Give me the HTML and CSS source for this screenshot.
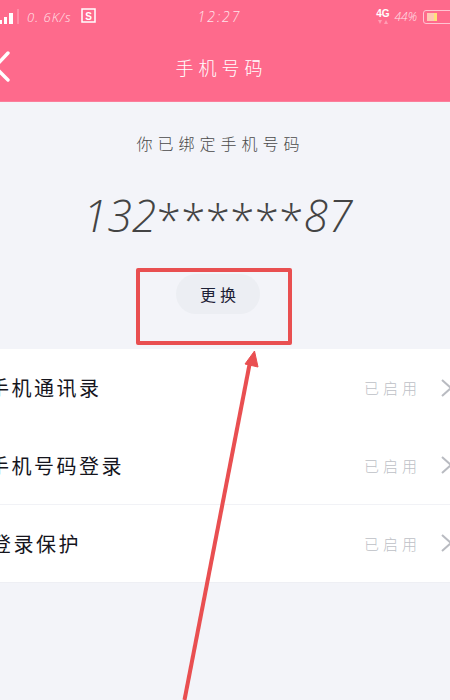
FILE: index.html
```html
<!DOCTYPE html>
<html lang="zh-CN">
<head>
    <meta charset="UTF-8">
    <meta name="viewport" content="width=device-width, initial-scale=1.0">
    <title>手机号码</title>
    <link rel="stylesheet" href="styles.css">
</head>
<body>
    <div class="phone">
        <div class="top-bar">
            <div class="status-bar">
                <div class="status-left">
                    <svg class="signal" width="20" height="16" viewBox="0 0 20 16">
                        <rect x="0" y="11" width="3" height="4" fill="#fff"/>
                        <rect x="5" y="8" width="3" height="7" fill="#fff"/>
                        <rect x="10" y="4" width="4" height="11" fill="#fff"/>
                        <rect x="18" y="0" width="2" height="15" fill="#ff8ba6"/>
                    </svg>
                    <span class="speed">0. 6K/s</span>
                    <svg class="s-icon" width="15" height="15" viewBox="0 0 15 15">
                        <path d="M1 1H14V14H1Z" fill="none" stroke="#fff" stroke-width="1.5"/>
                        <text x="7.5" y="11.5" class="s-mark" text-anchor="middle">S</text>
                    </svg>
                </div>
                <span class="clock">12:27</span>
                <div class="status-right">
                    <div class="network">
                        <span>4G</span>
                        <svg width="10" height="4" viewBox="0 0 10 4">
                            <path d="M0 0H4L2 4Z M6 4H10L8 0Z" fill="#ff9db3"/>
                        </svg>
                    </div>
                    <span class="battery-pct">44%</span>
                    <div class="battery"><div class="battery-fill"></div></div>
                </div>
            </div>
            <div class="nav">
                <svg class="back" width="10" height="32" viewBox="0 0 10 32">
                    <path d="M8 2L-5 16L8 29" fill="none" stroke="#fff" stroke-width="3.4" stroke-linecap="round" stroke-linejoin="round"/>
                </svg>
                <h1>手机号码</h1>
            </div>
        </div>

        <div class="bound">
            <p class="bound-label">你已绑定手机号码</p>
            <p class="bound-number">132<span class="stars">******</span>87</p>
            <button class="change-btn">更换</button>
        </div>

        <ul class="settings">
            <li>
                <span class="row-name name-a">手机通讯录</span>
                <span class="row-state">已启用</span>
                <svg class="row-arrow" width="10" height="18" viewBox="0 0 10 18">
                    <path d="M1 1L10 9L1 17" fill="none" stroke="#b9bbc1" stroke-width="2"/>
                </svg>
            </li>
            <li>
                <span class="row-name name-a">手机号码登录</span>
                <span class="row-state">已启用</span>
                <svg class="row-arrow" width="10" height="18" viewBox="0 0 10 18">
                    <path d="M1 1L10 9L1 17" fill="none" stroke="#b9bbc1" stroke-width="2"/>
                </svg>
            </li>
            <li class="with-line">
                <span class="row-name name-b">登录保护</span>
                <span class="row-state">已启用</span>
                <svg class="row-arrow" width="10" height="18" viewBox="0 0 10 18">
                    <path d="M1 1L10 9L1 17" fill="none" stroke="#b9bbc1" stroke-width="2"/>
                </svg>
            </li>
        </ul>

        <!-- red markup drawn on top of the screenshot -->
        <div class="mark-box"></div>
        <svg class="mark-arrow" width="450" height="700" viewBox="0 0 450 700">
            <path d="M184.500 700L250 362" fill="none" stroke="#e94f51" stroke-width="4"/>
            <path d="M254.500 351L258 367L245 364Z" fill="#e94f51" stroke="#e94f51" stroke-linejoin="round"/>
        </svg>
    </div>
</body>
</html>
```
FILE: styles.css
```css
* {
    box-sizing: border-box;
}

body {
    margin: 0;
    font-family: "Noto Sans CJK SC", "Liberation Sans", sans-serif;
    background-color: #f3f4f9;
}

.phone {
    position: relative;
    width: 450px;
    height: 700px;
    overflow: hidden;
    background-color: #f3f4f9;
}

.top-bar {
    height: 102px;
    background-color: #fe6a8c;
    color: #fff;
    border-bottom: 1px solid #fb7f9c;
}

.status-bar {
    display: flex;
    align-items: center;
    justify-content: space-between;
    height: 33px;
}

.status-left,
.status-right {
    display: flex;
    align-items: center;
    width: 165px;
}

.status-left {
    gap: 8px;
    margin-left: -1px;
}

.status-right {
    justify-content: flex-end;
    gap: 4px;
}

.s-icon {
    margin: -2px 0 0 1px;
}

.speed,
.battery-pct {
    font-family: "Open Sans", sans-serif;
    font-size: 13px;
    font-weight: 300;
    font-style: italic;
    letter-spacing: 1px;
    color: #ffe3ea;
}

.battery-pct {
    font-size: 12px;
    letter-spacing: 0;
}

.s-mark {
    font-family: "Liberation Sans", sans-serif;
    font-size: 10px;
    font-weight: 700;
    fill: #fff;
}

.clock {
    margin-left: -10px;
    font-family: "Open Sans", sans-serif;
    font-size: 14px;
    font-weight: 300;
    font-style: italic;
    letter-spacing: 2px;
    color: #ffe3ea;
}

.network {
    display: flex;
    flex-direction: column;
    align-items: center;
    margin-right: 1px;
    font-family: "Liberation Sans", sans-serif;
    font-size: 10px;
    font-weight: 700;
    line-height: 10px;
}

.network svg {
    display: block;
    margin-top: 1px;
}

.battery {
    flex: none;
    width: 33px;
    height: 14px;
    margin: 0 -6px 0 2px;
    padding: 2px 3px;
    border: 1px solid #ffc4d2;
    border-radius: 3px;
}

.battery-fill {
    width: 10px;
    height: 100%;
    background: linear-gradient(to right, #ffc9b5 70%, #ffe27a 70%);
}

.nav {
    position: relative;
    display: flex;
    align-items: center;
    justify-content: center;
    height: 68px;
    padding-right: 7px;
}

.nav h1 {
    margin: 0;
    font-size: 18px;
    font-weight: 300;
    letter-spacing: 5px;
}

.back {
    position: absolute;
    left: 0;
    top: 18px;
    overflow: visible;
}

.bound {
    display: flex;
    flex-direction: column;
    align-items: center;
    height: 247px;
    padding-right: 14px;
}

.bound-label {
    margin: 29px 0 0 5px;
    font-size: 16px;
    font-weight: 300;
    line-height: 24px;
    letter-spacing: 5px;
    color: #4a4a4a;
}

.bound-number {
    margin: 30px 0 0;
    font-family: "Open Sans", sans-serif;
    font-size: 44px;
    font-weight: 300;
    font-style: italic;
    line-height: 60px;
    letter-spacing: 0.3px;
    color: #444;
}

.stars {
    font-style: normal;
    line-height: 0;
    vertical-align: -5px;
}

.change-btn {
    display: block;
    width: 84px;
    height: 40px;
    margin: 29px 0 0;
    padding: 0 0 0 4px;
    border: none;
    border-radius: 20px;
    background: #eceef3;
    font-family: inherit;
    font-size: 16px;
    letter-spacing: 4px;
    color: #1d2136;
    cursor: pointer;
}

.settings {
    margin: 0;
    padding: 0;
    list-style-type: none;
    background: #fff;
    border-bottom: 1px solid #eeeff4;
}

.settings li {
    display: flex;
    align-items: center;
    height: 77.500px;
}

.settings li.with-line {
    border-top: 1px solid #f1f2f6;
}

.row-name {
    flex: 1;
    font-size: 20px;
    font-weight: 400;
    letter-spacing: 2.500px;
    color: #15151d;
    white-space: nowrap;
}

.name-a {
    margin-left: -11px;
}

.name-b {
    margin-left: -9px;
}

.row-state {
    font-size: 15px;
    font-weight: 300;
    letter-spacing: 4px;
    color: #bdbfc6;
}

.row-arrow {
    flex: none;
    margin: 0 -1px 0 20px;
}

.mark-box {
    position: absolute;
    left: 136px;
    top: 268px;
    width: 156px;
    height: 77px;
    border: 4px solid #e94f51;
    border-radius: 2px;
}

.mark-arrow {
    position: absolute;
    left: 0;
    top: 0;
}
```
